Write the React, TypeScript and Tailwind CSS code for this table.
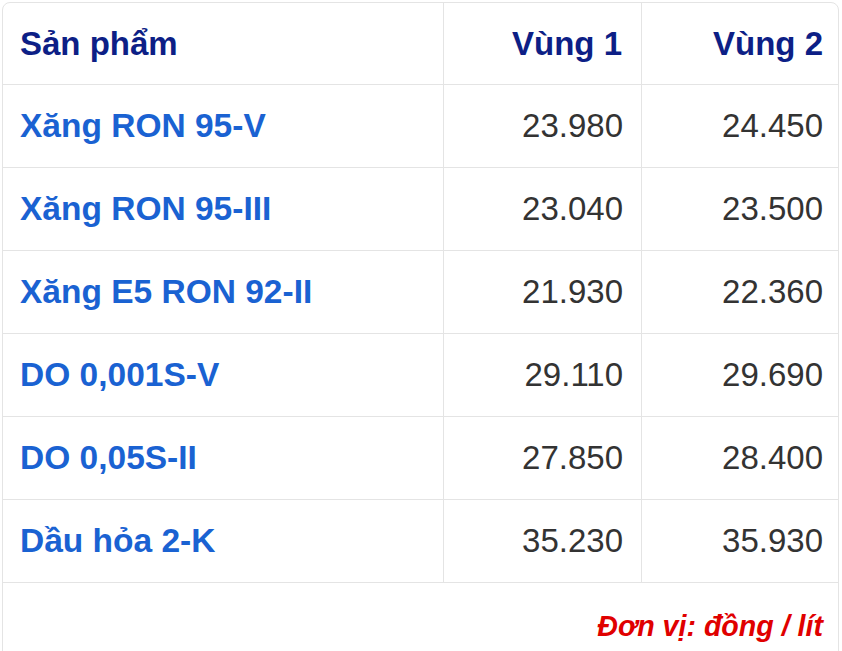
import React from 'react';

const rows = [
  { name: 'Xăng RON 95-V', v1: '23.980', v2: '24.450' },
  { name: 'Xăng RON 95-III', v1: '23.040', v2: '23.500' },
  { name: 'Xăng E5 RON 92-II', v1: '21.930', v2: '22.360' },
  { name: 'DO 0,001S-V', v1: '29.110', v2: '29.690' },
  { name: 'DO 0,05S-II', v1: '27.850', v2: '28.400' },
  { name: 'Dầu hỏa 2-K', v1: '35.230', v2: '35.930' },
];

export default function App() {
  return (
    <div className="w-[842px] h-[651px] overflow-hidden bg-white pt-[2px] pl-[2px] pr-[3px]" style={{ fontFamily: '"Liberation Sans", Arial, sans-serif' }}>
      <div className="border border-[#e4e4e4] rounded-lg overflow-hidden">
        <div className="grid grid-cols-[441px_198px_1fr] text-[33px]">
          <div className="h-[82px] flex items-center px-[17px] border-b border-r border-[#e4e4e4] font-bold text-[#0d1f86]">Sản phẩm</div>
          <div className="h-[82px] flex items-center justify-end pr-[19px] border-b border-r border-[#e4e4e4] font-bold text-[#0d1f86]">Vùng 1</div>
          <div className="h-[82px] flex items-center justify-end pr-[15px] border-b border-[#e4e4e4] font-bold text-[#0d1f86]">Vùng 2</div>
          {rows.map((r) => (
            <React.Fragment key={r.name}>
              <div className="h-[83px] flex items-center px-[17px] border-b border-r border-[#e4e4e4] font-bold text-[33.5px] text-[#1a62d2]">{r.name}</div>
              <div className="h-[83px] flex items-center justify-end pr-[18px] border-b border-r border-[#e4e4e4] text-[#333333]">{r.v1}</div>
              <div className="h-[83px] flex items-center justify-end pr-[15px] border-b border-[#e4e4e4] text-[#333333]">{r.v2}</div>
            </React.Fragment>
          ))}
        </div>
        <div className="h-[83px] flex items-center justify-end pr-[15px] pt-[4px] text-[28.6px] font-bold italic text-[#e00000]">
          Đơn vị: đồng / lít
        </div>
      </div>
    </div>
  );
}
